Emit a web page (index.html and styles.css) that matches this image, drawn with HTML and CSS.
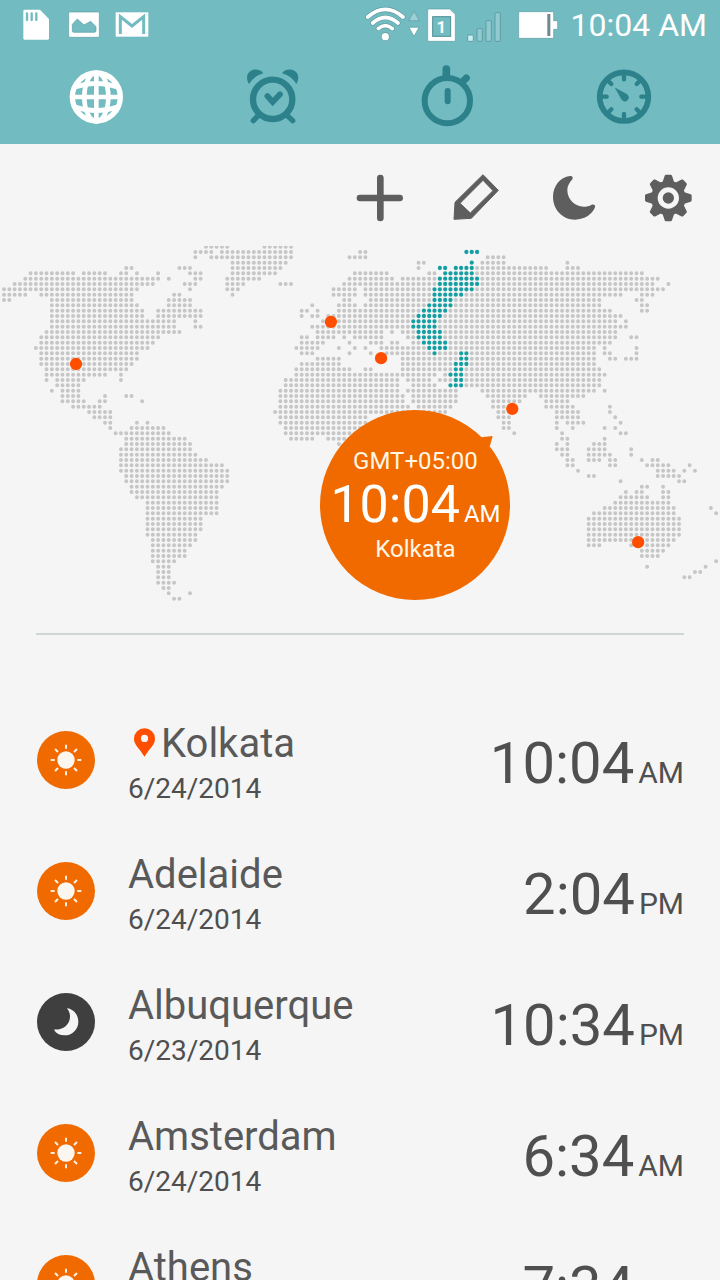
FILE: index.html
```html
<!DOCTYPE html>
<html lang="en">
<head>
<meta charset="utf-8">
<meta name="viewport" content="width=device-width, initial-scale=1">
<title>World Clock</title>
<link rel="stylesheet" href="styles.css">
</head>
<body>
<svg class="symbols" aria-hidden="true">
  <symbol id="day" viewBox="-87 -87 174 174">
    <circle r="87" fill="#f06a00"/>
    <circle r="26" fill="#fbf6ef"/>
    <path d="M0-34V-46M0 34V46M-34 0H-46M34 0H46M-24-24L-33-33M24-24L33-33M-24 24L-33 33M24 24L33 33" stroke="#fbf0e0" stroke-width="6"/>
  </symbol>
  <symbol id="night" viewBox="51 68 174 174">
    <circle cx="138" cy="155" r="87" fill="#3f3f3f"/>
    <path d="M141 114C160 116 175 133 175 154C175 178 156 195 134 195C119 195 108 189 102 178C106 178 112 178 118 177C138 172 150 158 150 138C150 130 147 122 141 114Z" fill="#f5f5f5"/>
  </symbol>
</svg>
<div class="app">
  <header class="header">
    <div class="status">
      <div class="status-left">
        <svg width="28" height="32" viewBox="66 27 84 96"><path d="M74 29H120L147 57V115Q147 119 143 119H74Q70 119 70 115V33Q70 29 74 29Z" fill="#fff"/><path d="M81 40V60M95 40V60M109 40V60" stroke="#71bbc1" stroke-width="7" stroke-linecap="round"/></svg>
        <svg width="34" height="32" viewBox="198 27 102 96"><rect x="206" y="36" width="92" height="76" rx="3" fill="#fff" stroke="#5f9da2" stroke-width="2"/><path d="M217 73L232 57L252 75L272 64L288 80V92Q288 97 283 97H222Q217 97 217 92Z" fill="#71bbc1" stroke="#5f9da2" stroke-width="2"/></svg>
        <svg width="34" height="32" viewBox="348 27 102 96"><rect x="347" y="37" width="98" height="73" fill="#fff"/><path d="M361 102V50L396 78L431 50V102" fill="none" stroke="#71bbc1" stroke-width="9"/></svg>
      </div>
      <div class="status-right">
        <svg width="91" height="34" viewBox="12 24 273 102">
          <g fill="none" stroke="#5f9da2" stroke-linecap="round" stroke-width="15"><path d="M20 51Q73 5 126 51M35 69Q73 36 111 69M52 86Q73 68 94 86"/></g>
          <circle cx="73" cy="110" r="13" fill="#5f9da2"/>
          <g fill="none" stroke="#fff" stroke-linecap="round" stroke-width="11"><path d="M20 51Q73 5 126 51M35 69Q73 36 111 69M52 86Q73 68 94 86"/></g>
          <circle cx="73" cy="110" r="11" fill="#fff"/>
          <path d="M159 34L175 62H143Z" fill="#9dd0d4" stroke="#5f9da2" stroke-width="2"/>
          <path d="M159 109L174 82H144Z" fill="#fff" stroke="#5f9da2" stroke-width="2"/>
          <path d="M203 27H266L283 43V121Q283 124 280 124H203Q200 124 200 121V30Q200 27 203 27Z" fill="#fff" stroke="#5f9da2" stroke-width="2"/>
          <rect x="215" y="50" width="54" height="59" fill="#71bbc1" stroke="#4f9096" stroke-width="3"/>
          <text class="sim" x="241" y="99">1</text>
        </svg>
        <svg width="33" height="34" viewBox="321 24 99 102"><g fill="#8fcacf" stroke="#5f9da2" stroke-width="3"><rect x="320" y="105" width="17" height="19" rx="3" fill="#c9f0f2"/><rect x="348" y="86" width="16" height="38" rx="3"/><rect x="375" y="62" width="16" height="62" rx="3"/><rect x="402" y="38" width="16" height="86" rx="3"/></g></svg>
        <svg width="46" height="34" viewBox="458 24 138 102"><path d="M478 35H577Q580 35 580 38V62H592V88H580V112Q580 115 577 115H478Q475 115 475 112V38Q475 35 478 35Z" fill="#fff" stroke="#5f9da2" stroke-width="2"/><rect x="561" y="42" width="9" height="66" fill="#6f8a8a"/></svg>
        <time class="status-time">10:04 AM</time>
      </div>
    </div>
    <nav class="tabs">
      <button class="tab tab-active" aria-label="World clock"><svg viewBox="200 198 180 180"><g transform="translate(291 291)" fill="none" stroke="currentColor" stroke-width="14"><circle r="72" stroke-width="16"/><ellipse rx="36" ry="73"/><path d="M0-73V73M-73 0H73M-64-30Q0-52 64-30M-64 30Q0 52 64 30"/></g></svg></button>
      <button class="tab" aria-label="Alarm"><svg viewBox="726 198 180 180"><g fill="none" stroke="currentColor" stroke-linecap="round"><circle cx="818" cy="298" r="59" stroke-width="19"/><path d="M775 346L760 362M861 346L878 362" stroke-width="16"/><path d="M802 288L818 306L840 283" stroke-width="17"/></g><path d="M747 252C736 235 741 215 758 210C772 206 785 212 790 220C770 226 757 236 747 252ZM889 252C900 235 895 215 878 210C864 206 851 212 846 220C866 226 879 236 889 252Z" fill="currentColor"/></svg></button>
      <button class="tab" aria-label="Stopwatch"><svg viewBox="174 198 180 180"><g fill="none" stroke="currentColor" stroke-linecap="round"><circle cx="262" cy="302" r="68" stroke-width="18"/><path d="M259 207V230" stroke-width="23"/><path d="M309 244L319 234" stroke-width="21"/><path d="M263 273V304" stroke-width="18"/></g></svg></button>
      <button class="tab" aria-label="Timer"><svg viewBox="702 198 180 180"><g transform="translate(792 290)" fill="none" stroke="currentColor" stroke-linecap="round"><circle r="73" stroke-width="17"/><path d="M0-52V-68M0 52V68M-52 0H-68M52 0H68M-38-38L-48-48M38-38L48-48M-38 38L-48 48M38 38L48 48" stroke-width="13"/><path d="M-25-25L8-7A11 11 0 1 1-7 8Z" fill="currentColor" stroke-width="2" stroke-linejoin="round"/></g></svg></button>
    </nav>
  </header>
  <div class="toolbar">
    <button class="tool" aria-label="Add city"><svg viewBox="48 43 144 144"><path d="M60 115H179M121 55V175" stroke="currentColor" stroke-width="20" stroke-linecap="round"/></svg></button>
    <button class="tool" aria-label="Edit"><svg viewBox="336 43 144 144"><path d="M429 45L475 92L394 176L342 179L345 128ZM429 62L360 131L391 160L459 93Z" fill="currentColor" fill-rule="evenodd" stroke="currentColor" stroke-width="3" stroke-linejoin="round"/></svg></button>
    <button class="tool" aria-label="Night mode"><svg viewBox="624 43 144 144"><path d="M690 49C660 52 639 80 639 112C639 150 668 180 705 180C735 180 757 163 765 143C767 136 762 133 755 135C748 139 740 141 731 141C704 141 682 119 682 92C682 80 687 70 697 59C700 53 697 48 690 49Z" fill="currentColor"/></svg></button>
    <button class="tool" aria-label="Settings"><svg viewBox="912 43 144 144"><g transform="translate(985 115)"><circle r="42" fill="none" stroke="currentColor" stroke-width="20"/><circle r="17" fill="currentColor"/><g fill="currentColor"><path id="teeth" d="M-18-46L-11-67Q-10-70-7-70H7Q10-70 11-67L18-46ZM-18 46L-11 67Q-10 70-7 70H7Q10 70 11 67L18 46ZM-46-18L-67-11Q-70-10-70-7V7Q-70 10-67 11L-46 18ZM46-18L67-11Q70-10 70-7V7Q70 10 67 11L46 18Z"/><use href="#teeth" transform="rotate(45)"/></g></g></svg></button>
  </div>
  <section class="map">
    <svg class="map-svg" viewBox="-0.75 -0.125 135 67.5" role="img" aria-label="World map">
      <path id="land" class="land"/>
      <path id="zone" class="zone"/>
      <g class="pins"><circle cx="13.5" cy="22" r="1.15"/><circle cx="61.3" cy="14.1" r="1.15"/><circle cx="70.7" cy="20.9" r="1.15"/><circle cx="95.3" cy="30.4" r="1.15"/><circle cx="118.9" cy="55.4" r="1.15"/></g>
    </svg>
    <div class="bubble">
      <svg class="bubble-tail" viewBox="0 0 34 30"><path d="M0 4L34 0L26 29L10 30Z"/></svg>
      <span class="bubble-label">GMT+05:00</span>
      <span class="bubble-time">10:04<small>AM</small></span>
      <span class="bubble-label">Kolkata</span>
    </div>
  </section>
  <hr class="divider">
  <ul class="cities">
    <li class="city"><svg class="phase"><use href="#day"/></svg><div class="place"><span class="name"><svg class="here" viewBox="341 81 64 87"><path d="M373 81A32 32 0 0 1 405 113C405 131 388 143 373 168C358 143 341 131 341 113A32 32 0 0 1 373 81ZM373 101A11 11 0 1 0 373 123A11 11 0 1 0 373 101Z" fill="#ff4e00"/></svg>Kolkata</span><span class="date">6/24/2014</span></div><time class="time">10:04<small>AM</small></time></li>
    <li class="city"><svg class="phase"><use href="#day"/></svg><div class="place"><span class="name">Adelaide</span><span class="date">6/24/2014</span></div><time class="time">2:04<small>PM</small></time></li>
    <li class="city"><svg class="phase"><use href="#night"/></svg><div class="place"><span class="name">Albuquerque</span><span class="date">6/23/2014</span></div><time class="time">10:34<small>PM</small></time></li>
    <li class="city"><svg class="phase"><use href="#day"/></svg><div class="place"><span class="name">Amsterdam</span><span class="date">6/24/2014</span></div><time class="time">6:34<small>AM</small></time></li>
    <li class="city"><svg class="phase"><use href="#day"/></svg><div class="place"><span class="name">Athens</span><span class="date">6/24/2014</span></div><time class="time">7:34<small>AM</small></time></li>
  </ul>
</div>
<script src="map.js"></script>
</body>
</html>
```
FILE: styles.css
```css
* { box-sizing: border-box; }
body {
  margin: 0;
  background: #f5f5f5;
  color: #595959;
  font-family: Roboto, "Noto Sans", sans-serif;
}
button { padding: 0; border: 0; background: none; color: inherit; }
svg { display: block; overflow: visible; }
.symbols { position: absolute; width: 0; height: 0; }
.app { display: flex; flex-direction: column; height: 100vh; overflow: hidden; }
.header { flex: none; background: #71bbc1; color: #2c818b; }
.status { display: flex; justify-content: space-between; align-items: center; height: 50px; padding: 0 13px 0 22px; }
.status-left { display: flex; gap: 16px; }
.status-right { display: flex; align-items: center; gap: 12px; }
.status-time { color: #fff; font-size: 32px; line-height: 48px; }
.sim { font: bold 50px Roboto, sans-serif; fill: #fff; text-anchor: middle; }
.tabs { display: flex; height: 94px; padding: 0 8px 2px; }
.tab { flex: 1; display: flex; justify-content: center; align-items: center; }
.tab svg { width: 60px; height: 60px; }
.tab-active { color: #fff; }
.toolbar { flex: none; display: flex; justify-content: flex-end; padding: 6px 4px 0; color: #5e5e5e; }
.tool { display: flex; justify-content: center; align-items: center; width: 96px; height: 96px; }
.tool svg { width: 48px; height: 48px; }
.map { flex: none; position: relative; }
.map-svg { width: 100%; overflow: hidden; }
.land, .zone { fill: none; stroke: #c6c6c6; stroke-width: 0.74; stroke-linecap: round; }
.zone { stroke: #159fa2; stroke-width: 0.8; }
.pins { fill: #ff4e00; }
.bubble {
  position: absolute;
  left: 57.7%;
  top: 72%;
  transform: translate(-50%, -50%);
  display: flex;
  flex-direction: column;
  justify-content: center;
  align-items: center;
  width: 190px;
  height: 190px;
  border-radius: 50%;
  background: #f06a00;
  color: #fff6e4;
}
.bubble-tail { position: absolute; top: 26px; right: 17px; width: 12px; height: 10px; fill: #f06a00; }
.bubble-label { font-size: 24px; line-height: 32px; }
.bubble-time { display: flex; align-items: baseline; gap: 4px; font-size: 52px; line-height: 56px; color: #fff; }
.bubble-time small { font-size: 24px; line-height: 24px; }
.divider { flex: none; height: 2px; margin: 27px 36px 59px; border: 0; background: #d0d6d5; }
.cities { flex: 1; min-height: 0; margin: 0; padding: 0 36px; list-style: none; }
.city { display: flex; align-items: center; height: 131px; }
.phase { flex: none; width: 58px; height: 58px; margin: 0 33px 0 1px; }
.place { flex: 1; display: flex; flex-direction: column; padding-top: 2px; }
.name { display: flex; align-items: center; font-size: 40px; line-height: 56px; }
.here { width: 21px; height: 29px; margin: 0 6px 2px; }
.date { font-size: 28px; line-height: 34px; color: #4f4f4f; }
.time { display: flex; align-items: baseline; gap: 4px; padding-top: 6px; font-size: 58px; line-height: 72px; color: #4f4f4f; }
.time small { font-size: 30px; line-height: 30px; }
```
FILE: map.js
```js
// Each row lists the dots of one latitude as single columns or "first-last" runs.
const land = [
  "38-42 49-54",
  "36-39 41-54 67-68",
  "36 39-54 65-68 91-94",
  "43-53 78-79 90-94 106",
  "23-24 33-35 43-52 78 89-102 106-108",
  "5-13 15-19 22-23 25 29 35-37 43-51 66-72 80-81 89-120",
  "4-29 31 36-37 42-48 65-73 75-81 90-123",
  "2-28 34-36 42-45 52-54 64-81 90-122 125",
  "0-25 35 42-44 62-66 68-80 89-124",
  "0-4 7-24 32-33 43 62-66 68-80 87-116 120-122",
  "0-1 9-24 31-35 64-65 69-80 85-112 119-120",
  "9-25 31-35 58 63-66 68-79 85-112 120-121",
  "9-26 29-37 56-57 59 63-78 84-114 120-121",
  "9-26 29-37 56 58-59 61-77 83-116",
  "9-32 36 60-76 82-115 117",
  "9-32 36-37 58-76 82-117",
  "8-33 59-71 73 75-77 83-115",
  "7-29 56-57 59-62 64 66-71 76-77 83-115 118-119",
  "7-28 56-60 65 69-71 73-74 77-78 84-114",
  "6-27 55-59 63 66 68 71-79 84-111 113 119",
  "7-25 56-58 65 69 72-80 82-85 88-111 113-114 119",
  "7-25 59-63 75-85 88-111 114-115 117-119",
  "7-24 56-63 75-84 88-111",
  "8-23 55-65 68-69 75-84 87-112",
  "8-19 22 55-81 83 87-113",
  "8 10-15 22 53-74 76-80 82-84 87-112",
  "10-14 53-74 77-81 87-112",
  "9 11-14 52-74 76-85 90-111 113",
  "11-14 19 23-24 52-75 77-85 91-98 101-109",
  "11-15 18-19 26 52-75 77-85 92-97 102-106",
  "13-18 52-76 78-84 92-96 102-107 114",
  "16-20 51-83 93-95 104-108 114",
  "17-20 52-68 93-95 104-108 115",
  "19-20 25 27 52-68 94-95 104 106-109 116",
  "20 24-30 53-68 94-95 104 107 113 115",
  "21-31 53-66 96 105 116-117",
  "23-34 54-58 61-65 105-106 113",
  "23-35 63 104 106 111-113",
  "22-35 104-106 110-113 118",
  "22-36 105-106 110-114 118",
  "22-38 106-107 110-112 114-115 120 122-123",
  "22-41 106-107 114-115 121-125 129",
  "22-42 108 123-126 128 130",
  "23-42 110-111 123-127",
  "23-42 116 127-128",
  "24-41 120-121 124",
  "24-40 117 119-120 124-125",
  "25-40 116-121 124-125",
  "27-40 115-125",
  "27-40 113-126 133",
  "27-40 111-126 134",
  "27-37 110-127",
  "27-37 110-127",
  "27-37 110-127",
  "27-36 110-127",
  "28-36 110-126",
  "28-35 110-112 118 121-125",
  "28-34 120-124",
  "28-34 120-123",
  "28-32 134",
  "29-31 121 132",
  "29-31 130-131",
  "29-31 128-129",
  "29-32",
  "30-31",
  "31 35",
  "32-33"
];

const zone = [
  "", "87-89", "", "88", "82-83 85-88", "83-88", "82-89", "82-89",
  "81-88", "81-86", "81-84", "80-84", "79-83", "78-82", "77-81", "77-81",
  "78-82", "78-82", "79-83", "80-83", "81 86-87", "86-87", "85-87", "85-86",
  "84-86", "85-86", "84-86"
];

function dots(rows) {
  let d = "";
  rows.forEach((row, y) => {
    row.split(" ").filter(Boolean).forEach(run => {
      const [first, last = first] = run.split("-").map(Number);
      for (let x = first; x <= last; x++) d += `M${(x * 0.9966).toFixed(2)} ${y}h0`;
    });
  });
  return d;
}

document.getElementById("land").setAttribute("d", dots(land));
document.getElementById("zone").setAttribute("d", dots(zone));
```
